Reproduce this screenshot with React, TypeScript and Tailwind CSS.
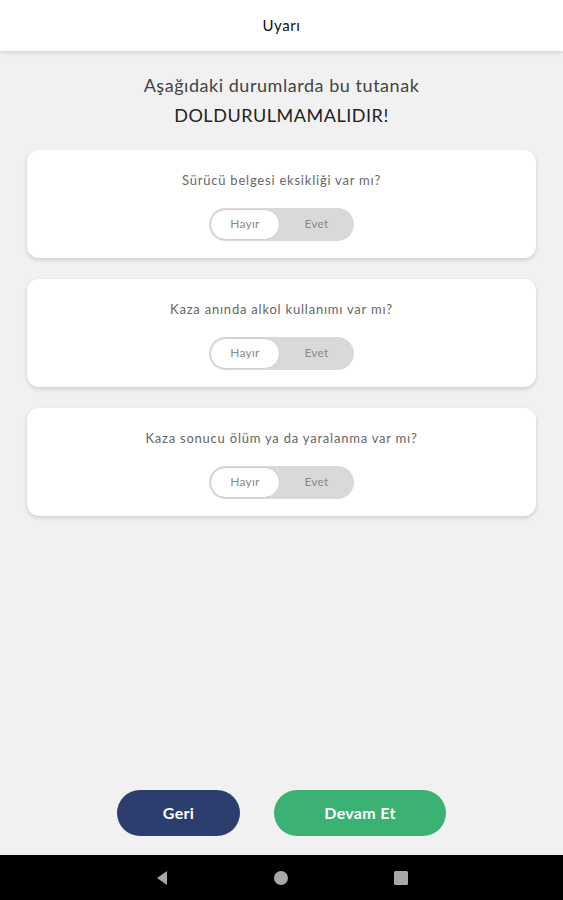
import React from "react";

const questions = [
  "Sürücü belgesi eksikliği var mı?",
  "Kaza anında alkol kullanımı var mı?",
  "Kaza sonucu ölüm ya da yaralanma var mı?",
];

function Toggle() {
  return (
    <div className="flex h-[33px] w-[145px] items-center rounded-full bg-[#d9d9d9] p-[1px]">
      <div className="flex h-full w-[70px] items-center justify-center rounded-full border border-[#cfcfcf] bg-white text-[12px] tracking-[0.02em] text-[#8a8a8a]">
        Hayır
      </div>
      <div className="flex h-full flex-1 items-center justify-center text-[12px] tracking-[0.02em] text-[#8a8a8a]">
        Evet
      </div>
    </div>
  );
}

export default function App() {
  return (
    <div
      className="flex h-[900px] w-[563px] flex-col bg-[#f1f1f1]"
      style={{ fontFamily: "Lato, 'Noto Sans', sans-serif" }}
    >
      {/* Header */}
      <div className="relative z-10 flex h-[51px] items-center justify-center bg-white text-[15px] tracking-[0.04em] text-[#111] shadow-[0_2px_4px_rgba(0,0,0,0.12)]">
        Uyarı
      </div>

      {/* Title */}
      <div className="mt-[19px] flex flex-col items-center text-[18px] leading-[30px] tracking-[0.03em]">
        <p className="text-[#444]">Aşağıdaki durumlarda bu tutanak</p>
        <p className="text-[#222]">DOLDURULMAMALIDIR!</p>
      </div>

      {/* Questions */}
      <div className="mt-[20px] flex flex-col gap-[21px] px-[27px]">
        {questions.map((q) => (
          <div
            key={q}
            className="flex h-[108px] flex-col items-center rounded-[12px] bg-white pt-[21px] shadow-[0_2px_4px_rgba(0,0,0,0.15)]"
          >
            <p className="text-[13px] tracking-[0.06em] text-[#666]">{q}</p>
            <div className="mt-[17px]">
              <Toggle />
            </div>
          </div>
        ))}
      </div>

      <div className="flex-1" />

      {/* Buttons */}
      <div className="mb-[19px] flex justify-center gap-[34px]">
        <button className="h-[46px] w-[123px] rounded-full bg-[#2c3e6e] text-[16px] font-bold tracking-[0.02em] text-white">
          Geri
        </button>
        <button className="h-[46px] w-[172px] rounded-full bg-[#3bb273] text-[16px] font-bold tracking-[0.02em] text-white">
          Devam Et
        </button>
      </div>

      {/* Android nav bar */}
      <div className="flex h-[45px] items-center justify-center gap-[104px] bg-black">
        <svg width="14" height="16" viewBox="0 0 14 16">
          <path d="M12 1 L2 8 L12 15 Z" fill="#a8a8a8" />
        </svg>
        <svg width="16" height="16" viewBox="0 0 16 16">
          <circle cx="8" cy="8" r="7" fill="#a8a8a8" />
        </svg>
        <svg width="16" height="16" viewBox="0 0 16 16">
          <rect x="1" y="1" width="14" height="14" rx="1.5" fill="#a8a8a8" />
        </svg>
      </div>
    </div>
  );
}
